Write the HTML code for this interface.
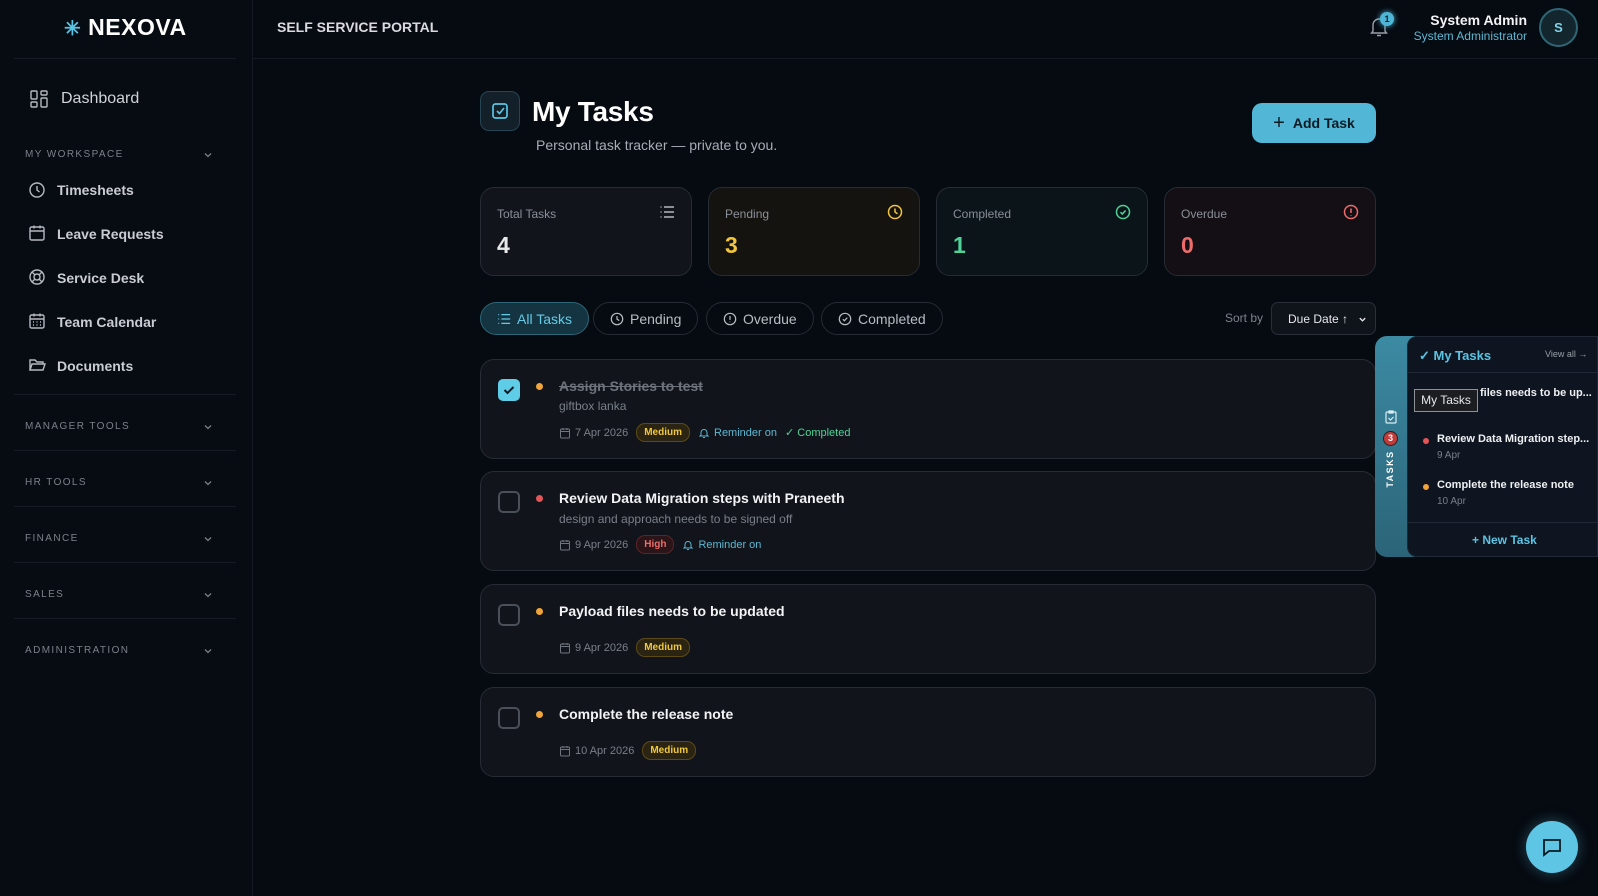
<!DOCTYPE html>
<html><head><meta charset="utf-8"><style>
*{box-sizing:border-box;margin:0;padding:0}
body{width:1598px;height:896px;overflow:hidden;background:#060a11;font-family:"Liberation Sans",sans-serif;color:#e6e8eb;position:relative}
.abs{position:absolute}
.side{left:0;top:0;width:253px;height:896px;background:#070b12;border-right:1px solid #161b23}
.hdr{left:253px;top:0;right:0;height:59px;border-bottom:1px solid #161b23}
.logo{left:64px;top:14px;font-size:23px;font-weight:bold;color:#fff;letter-spacing:.5px}
.sline{left:14px;width:222px;height:1px;background:#171c24}
.nav{left:57px;font-size:14px;font-weight:bold;color:#c9ccd2}
.nico{left:28px;width:18px;height:18px}
.sec{left:25px;font-size:10px;letter-spacing:1.4px;color:#7c818a}
.chev{left:203px;width:10px;height:10px}
.card{border:1px solid #262b34;border-radius:14px;background:#11141b}
.stat{top:187px;height:89px;width:212px}
.stat .l{position:absolute;left:16px;top:19px;font-size:12px;color:#8a8f98}
.stat .n{position:absolute;left:16px;top:44px;font-size:23px;font-weight:bold}
.stat svg{position:absolute;right:16px;top:16px}
.pill{top:302px;height:33px;border:1px solid #262b34;border-radius:17px;font-size:14px;color:#b8bcc3;display:flex;align-items:center;gap:6px;padding:0 16px}
.task{left:480px;width:896px}
.cb{position:absolute;left:17px;width:22px;height:22px;border:2px solid #4a4f58;border-radius:5px}
.dot{position:absolute;left:55px;width:7px;height:7px;border-radius:50%}
.tt{position:absolute;left:78px;font-size:14px;font-weight:bold;color:#f2f3f5}
.td{position:absolute;left:78px;font-size:12px;color:#7a7f88}
.meta{position:absolute;left:78px;font-size:11px;color:#7a7f88;display:flex;align-items:center;gap:8px}
.meta span{display:flex;align-items:center;gap:4px}
.badge{font-size:10px;font-weight:bold;border-radius:9px;padding:3px 7px}
.med{color:#f0c93c;background:#2b2412;border:1px solid #5c4a17}
.high{color:#ee6b6b;background:#2c1518;border:1px solid #5a2428}
.rem{color:#5bb8d3}
</style></head><body>
<div class="abs side"></div>
<div class="abs hdr"></div>
<div class="abs logo"><span style="color:#5bc4e3;font-size:20px">✳</span> NEXOVA</div>
<div class="abs" style="left:277px;top:19px;font-size:14px;font-weight:bold;color:#d9dbdf">SELF SERVICE PORTAL</div>
<div class="abs sline" style="top:58px"></div>

<svg class="abs" style="left:30px;top:90px" width="18" height="18" viewBox="0 0 18 18" fill="none" stroke="#b5b9c0" stroke-width="1.4"><rect x="1" y="1" width="6" height="8" rx="1"/><rect x="11" y="1" width="6" height="4" rx="1"/><rect x="1" y="12" width="6" height="5" rx="1"/><rect x="11" y="8" width="6" height="9" rx="1"/></svg>
<div class="abs" style="left:61px;top:90px;font-size:16px;color:#d0d3d8">Dashboard</div>

<div class="abs sec" style="top:149px">MY WORKSPACE</div>
<svg class="abs chev" style="top:150px" viewBox="0 0 10 10" fill="none" stroke="#7c818a" stroke-width="1.3"><path d="M2 3.5l3 3 3-3"/></svg>

<svg class="abs nico" style="top:181px" viewBox="0 0 18 18" fill="none" stroke="#b5b9c0" stroke-width="1.4"><circle cx="9" cy="9" r="7"/><path d="M9 5v4l2.5 2"/></svg>
<div class="abs nav" style="top:182px">Timesheets</div>
<svg class="abs nico" style="top:224px" viewBox="0 0 18 18" fill="none" stroke="#b5b9c0" stroke-width="1.4"><rect x="2" y="3" width="14" height="13" rx="1.5"/><path d="M2 7h14M6 1.5v3M12 1.5v3"/></svg>
<div class="abs nav" style="top:226px">Leave Requests</div>
<svg class="abs nico" style="top:268px" viewBox="0 0 18 18" fill="none" stroke="#b5b9c0" stroke-width="1.4"><circle cx="9" cy="9" r="7"/><circle cx="9" cy="9" r="3"/><path d="M4 4l3 3M14 4l-3 3M4 14l3-3M14 14l-3-3"/></svg>
<div class="abs nav" style="top:270px">Service Desk</div>
<svg class="abs nico" style="top:312px" viewBox="0 0 18 18" fill="none" stroke="#b5b9c0" stroke-width="1.4"><rect x="2" y="3" width="14" height="13" rx="1.5"/><path d="M2 7h14M6 1.5v3M12 1.5v3M5 10h1M8.5 10h1M12 10h1M5 13h1M8.5 13h1M12 13h1"/></svg>
<div class="abs nav" style="top:314px">Team Calendar</div>
<svg class="abs nico" style="top:356px" viewBox="0 0 18 18" fill="none" stroke="#b5b9c0" stroke-width="1.4"><path d="M2 14V4h5l2 2h6v2M2 14l2-6h13l-2 6z"/></svg>
<div class="abs nav" style="top:358px">Documents</div>

<div class="abs sline" style="top:394px"></div>
<div class="abs sec" style="top:421px">MANAGER TOOLS</div>
<svg class="abs chev" style="top:422px" viewBox="0 0 10 10" fill="none" stroke="#7c818a" stroke-width="1.3"><path d="M2 3.5l3 3 3-3"/></svg>
<div class="abs sline" style="top:450px"></div>
<div class="abs sec" style="top:477px">HR TOOLS</div>
<svg class="abs chev" style="top:478px" viewBox="0 0 10 10" fill="none" stroke="#7c818a" stroke-width="1.3"><path d="M2 3.5l3 3 3-3"/></svg>
<div class="abs sline" style="top:506px"></div>
<div class="abs sec" style="top:533px">FINANCE</div>
<svg class="abs chev" style="top:534px" viewBox="0 0 10 10" fill="none" stroke="#7c818a" stroke-width="1.3"><path d="M2 3.5l3 3 3-3"/></svg>
<div class="abs sline" style="top:562px"></div>
<div class="abs sec" style="top:589px">SALES</div>
<svg class="abs chev" style="top:590px" viewBox="0 0 10 10" fill="none" stroke="#7c818a" stroke-width="1.3"><path d="M2 3.5l3 3 3-3"/></svg>
<div class="abs sline" style="top:618px"></div>
<div class="abs sec" style="top:645px">ADMINISTRATION</div>
<svg class="abs chev" style="top:646px" viewBox="0 0 10 10" fill="none" stroke="#7c818a" stroke-width="1.3"><path d="M2 3.5l3 3 3-3"/></svg>

<!-- header right -->
<svg class="abs" style="left:1369px;top:16px" width="20" height="22" viewBox="0 0 20 22" fill="none" stroke="#9aa0a8" stroke-width="1.4"><path d="M4 15V9a6 6 0 0112 0v6l1.5 2h-15z M8 19.5h4"/></svg>
<div class="abs" style="left:1380px;top:12px;width:14px;height:14px;border-radius:50%;background:#4fb6d6;font-size:9px;font-weight:bold;color:#06202b;text-align:center;line-height:14px;box-shadow:0 0 6px #4fb6d6">1</div>
<div class="abs" style="right:71px;top:12px;font-size:14px;font-weight:bold;color:#f2f3f5;text-align:right">System Admin</div>
<div class="abs" style="right:71px;top:29px;font-size:12px;color:#5bb8d3;text-align:right">System Administrator</div>
<div class="abs" style="left:1539px;top:8px;width:39px;height:39px;border-radius:50%;border:2px solid #2f6676;background:#13262e;color:#7fd3ea;font-weight:bold;font-size:13px;text-align:center;line-height:35px">S</div>

<!-- title -->
<div class="abs" style="left:480px;top:91px;width:40px;height:40px;border-radius:9px;background:#142029;border:1px solid #264552"></div>
<svg class="abs" style="left:491px;top:102px" width="18" height="18" viewBox="0 0 18 18" fill="none" stroke="#5bc4e3" stroke-width="1.7"><rect x="2" y="2" width="14" height="14" rx="2.5"/><path d="M6 9l2.5 2.5L13 6"/></svg>
<div class="abs" style="left:532px;top:96px;font-size:28px;font-weight:bold;color:#fff;letter-spacing:-.3px">My Tasks</div>
<div class="abs" style="left:536px;top:137px;font-size:14px;color:#a8adb5">Personal task tracker — private to you.</div>
<div class="abs" style="left:1252px;top:103px;width:124px;height:40px;border-radius:10px;background:#52b6d6;color:#0b1a22;font-weight:bold;font-size:14px;display:flex;align-items:center;justify-content:center;gap:8px"><span style="font-size:20px;font-weight:normal">+</span>Add Task</div>

<!-- stats -->
<div class="abs card stat" style="left:480px"><div class="l">Total Tasks</div><div class="n" style="color:#e8e9eb">4</div>
<svg width="16" height="16" viewBox="0 0 16 16" fill="none" stroke="#b5b9c0" stroke-width="1.4"><path d="M5 3h10M5 8h10M5 13h10M1.5 3h1M1.5 8h1M1.5 13h1"/></svg></div>
<div class="abs card stat" style="left:708px;background:#14130f"><div class="l">Pending</div><div class="n" style="color:#f2c53d">3</div>
<svg width="16" height="16" viewBox="0 0 16 16" fill="none" stroke="#f2c53d" stroke-width="1.5"><circle cx="8" cy="8" r="6.5"/><path d="M8 4.5V8l2.5 1.8"/></svg></div>
<div class="abs card stat" style="left:936px;background:#0b1418"><div class="l">Completed</div><div class="n" style="color:#4fd39a">1</div>
<svg width="16" height="16" viewBox="0 0 16 16" fill="none" stroke="#4fd39a" stroke-width="1.5"><circle cx="8" cy="8" r="6.5"/><path d="M5.5 8.2l1.8 1.8 3.3-3.5"/></svg></div>
<div class="abs card stat" style="left:1164px;background:#140f14"><div class="l">Overdue</div><div class="n" style="color:#ee6b6b">0</div>
<svg width="16" height="16" viewBox="0 0 16 16" fill="none" stroke="#ee6b6b" stroke-width="1.5"><circle cx="8" cy="8" r="6.5"/><path d="M8 4.5v4.5M8 11v.6"/></svg></div>

<!-- filters -->
<div class="abs pill" style="left:480px;background:#143441;border-color:#2c6677;color:#66c9e6"><svg width="14" height="14" viewBox="0 0 16 16" fill="none" stroke="#66c9e6" stroke-width="1.4"><path d="M5 3h10M5 8h10M5 13h10M1.5 3h1M1.5 8h1M1.5 13h1"/></svg>All Tasks</div>
<div class="abs pill" style="left:593px"><svg width="14" height="14" viewBox="0 0 16 16" fill="none" stroke="#b8bcc3" stroke-width="1.4"><circle cx="8" cy="8" r="6.5"/><path d="M8 4.5V8l2.5 1.8"/></svg>Pending</div>
<div class="abs pill" style="left:706px"><svg width="14" height="14" viewBox="0 0 16 16" fill="none" stroke="#b8bcc3" stroke-width="1.4"><circle cx="8" cy="8" r="6.5"/><path d="M8 4.5v4.5M8 11v.6"/></svg>Overdue</div>
<div class="abs pill" style="left:821px"><svg width="14" height="14" viewBox="0 0 16 16" fill="none" stroke="#b8bcc3" stroke-width="1.4"><circle cx="8" cy="8" r="6.5"/><path d="M5.5 8.2l1.8 1.8 3.3-3.5"/></svg>Completed</div>
<div class="abs" style="left:1225px;top:311px;font-size:12px;color:#7d828b">Sort by</div>
<div class="abs" style="left:1271px;top:302px;width:105px;height:33px;border:1px solid #2a2f38;border-radius:7px;background:#0f131a;font-size:12px;color:#e6e8eb;padding:9px 0 0 16px">Due Date ↑
<svg style="position:absolute;right:8px;top:12px" width="9" height="9" viewBox="0 0 10 10" fill="none" stroke="#e6e8eb" stroke-width="1.5"><path d="M2 3.5l3 3 3-3"/></svg></div>

<svg width="0" height="0" style="position:absolute"><defs>
<symbol id="cal" viewBox="0 0 12 12"><rect x="1.5" y="2" width="9" height="9" rx="1" fill="none" stroke="#6f747d" stroke-width="1"/><path d="M1.5 4.5h9M4 1v2M8 1v2" stroke="#6f747d" stroke-width="1"/></symbol>
<symbol id="bell" viewBox="0 0 12 12"><path d="M3 8V5.5a3 3 0 016 0V8l1 1H2z M5 10.5h2" fill="none" stroke="#5bb8d3" stroke-width="1"/></symbol>
</defs></svg>

<!-- tasks -->
<div class="abs card task" style="top:359px;height:100px">
 <div class="cb" style="top:19px;background:#5fcde8;border-color:#5fcde8"><svg width="18" height="18" viewBox="0 0 18 18" fill="none" stroke="#0b1a22" stroke-width="2"><path d="M4.5 9l3 3 6-6"/></svg></div>
 <div class="dot" style="top:23px;background:#f0a43a"></div>
 <div class="tt" style="top:18px;color:#6d727b;text-decoration:line-through">Assign Stories to test</div>
 <div class="td" style="top:39px">giftbox lanka</div>
 <div class="meta" style="top:63px"><span><svg width="12" height="12"><use href="#cal"/></svg>7 Apr 2026</span><span class="badge med">Medium</span><span class="rem"><svg width="12" height="12"><use href="#bell"/></svg>Reminder on</span><span style="color:#4fd39a">✓ Completed</span></div>
</div>
<div class="abs card task" style="top:471px;height:100px">
 <div class="cb" style="top:19px"></div>
 <div class="dot" style="top:23px;background:#e55555"></div>
 <div class="tt" style="top:18px">Review Data Migration steps with Praneeth</div>
 <div class="td" style="top:40px">design and approach needs to be signed off</div>
 <div class="meta" style="top:63px"><span><svg width="12" height="12"><use href="#cal"/></svg>9 Apr 2026</span><span class="badge high">High</span><span class="rem"><svg width="12" height="12"><use href="#bell"/></svg>Reminder on</span></div>
</div>
<div class="abs card task" style="top:584px;height:90px">
 <div class="cb" style="top:19px"></div>
 <div class="dot" style="top:23px;background:#f0a43a"></div>
 <div class="tt" style="top:18px">Payload files needs to be updated</div>
 <div class="meta" style="top:53px"><span><svg width="12" height="12"><use href="#cal"/></svg>9 Apr 2026</span><span class="badge med">Medium</span></div>
</div>
<div class="abs card task" style="top:687px;height:90px">
 <div class="cb" style="top:19px"></div>
 <div class="dot" style="top:23px;background:#f0a43a"></div>
 <div class="tt" style="top:18px">Complete the release note</div>
 <div class="meta" style="top:53px"><span><svg width="12" height="12"><use href="#cal"/></svg>10 Apr 2026</span><span class="badge med">Medium</span></div>
</div>

<!-- right panel -->
<div class="abs" style="left:1375px;top:336px;width:40px;height:221px;border-radius:12px 0 0 12px;background:linear-gradient(#3c8aa3,#2b6478)"></div>
<svg class="abs" style="left:1385px;top:410px" width="12" height="14" viewBox="0 0 12 14" fill="none" stroke="#d8eef5" stroke-width="1.2"><rect x="1" y="2" width="10" height="11" rx="1"/><path d="M4 1h4v2H4zM3.5 8l2 2 3-3"/></svg>
<div class="abs" style="left:1383px;top:431px;width:15px;height:15px;border-radius:50%;background:#c23b3b;border:1px solid #222;font-size:9px;font-weight:bold;color:#fff;text-align:center;line-height:13px">3</div>
<div class="abs" style="left:1368px;top:464px;width:44px;font-size:9px;font-weight:bold;color:#fff;letter-spacing:1.5px;transform:rotate(-90deg);text-align:center">TASKS</div>
<div class="abs" style="left:1407px;top:336px;width:191px;height:221px;background:#0e1520;border:1px solid #1f2a36;border-radius:10px 0 0 10px"></div>
<div class="abs" style="left:1407px;top:372px;width:191px;height:1px;background:#1f2a36"></div>
<div class="abs" style="left:1419px;top:348px;font-size:13px;font-weight:bold;color:#5bc4e3">✓ My Tasks</div>
<div class="abs" style="left:1545px;top:349px;font-size:9px;color:#9aa0a8">View all →</div>
<div class="abs" style="left:1480px;top:387px;font-size:11px;font-weight:bold;color:#eef0f2">files needs to be up...</div>
<div class="abs" style="left:1414px;top:389px;width:64px;height:23px;background:#1c1d20;border:1px solid #8e9196;font-size:12px;color:#e6e8eb;text-align:center;line-height:21px">My Tasks</div>
<div class="abs" style="left:1423px;top:438px;width:6px;height:6px;border-radius:50%;background:#e55555"></div>
<div class="abs" style="left:1437px;top:433px;font-size:11px;font-weight:bold;color:#eef0f2">Review Data Migration step...</div>
<div class="abs" style="left:1437px;top:450px;font-size:10px;color:#7a7f88">9 Apr</div>
<div class="abs" style="left:1423px;top:484px;width:6px;height:6px;border-radius:50%;background:#f0a43a"></div>
<div class="abs" style="left:1437px;top:479px;font-size:11px;font-weight:bold;color:#eef0f2">Complete the release note</div>
<div class="abs" style="left:1437px;top:496px;font-size:10px;color:#7a7f88">10 Apr</div>
<div class="abs" style="left:1407px;top:522px;width:191px;height:1px;background:#1f2a36"></div>
<div class="abs" style="left:1472px;top:533px;font-size:12px;font-weight:bold;color:#5bc4e3">+ New Task</div>

<!-- chat -->
<div class="abs" style="left:1526px;top:821px;width:52px;height:52px;border-radius:50%;background:#5ec6e4;box-shadow:0 0 14px rgba(94,198,228,.35)"></div>
<svg class="abs" style="left:1541px;top:836px" width="22" height="22" viewBox="0 0 22 22" fill="none" stroke="#0b1a22" stroke-width="1.8"><path d="M3 4h16v11H8l-5 4z"/></svg>
</body></html>
